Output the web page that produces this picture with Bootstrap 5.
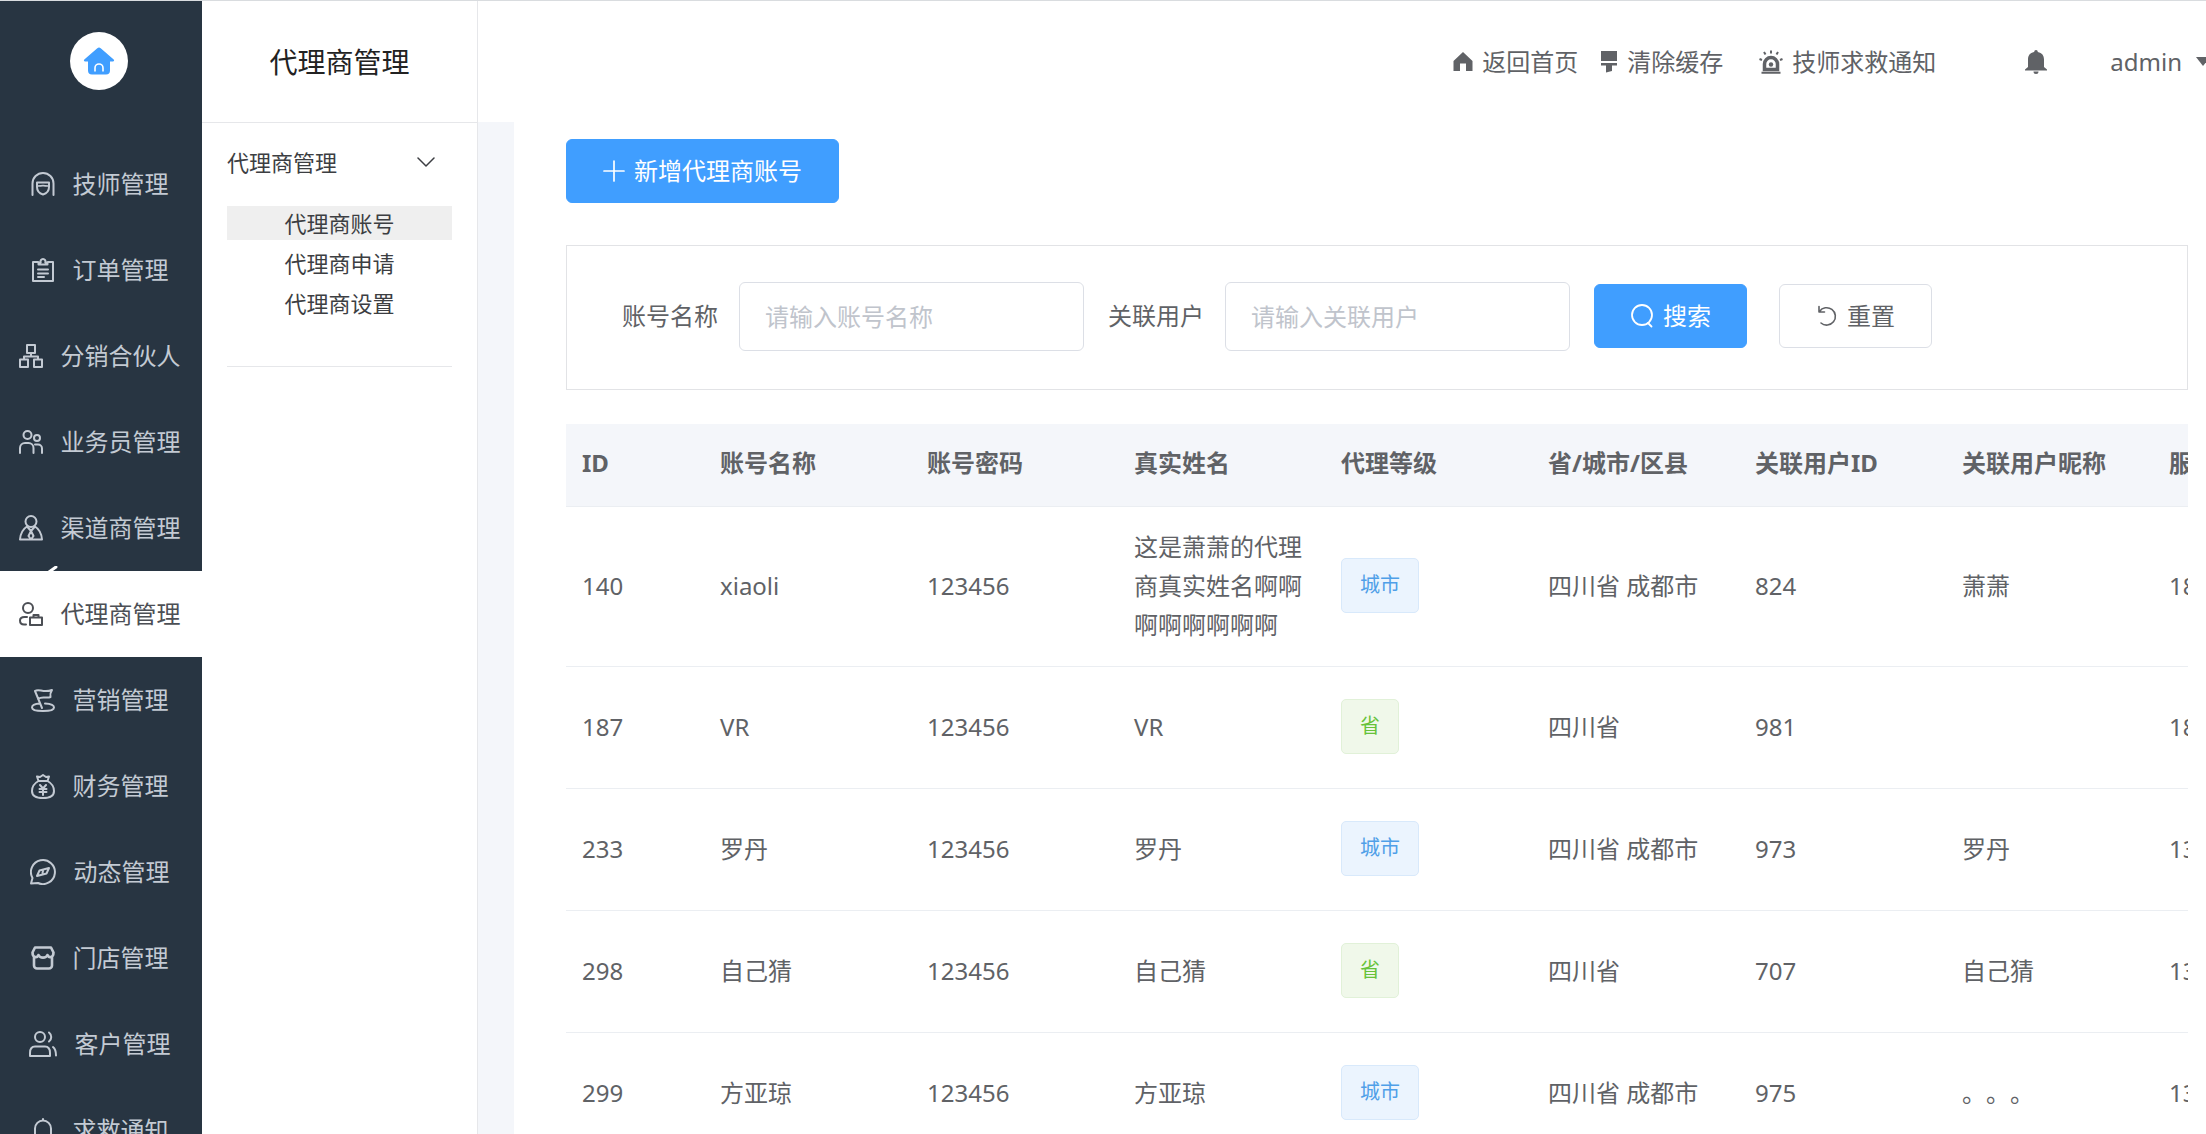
<!DOCTYPE html>
<html lang="zh-CN">
<head>
<meta charset="utf-8">
<meta name="viewport" content="width=device-width, initial-scale=1">
<title>代理商管理</title>
<link href="https://cdn.jsdelivr.net/npm/bootstrap@5.3.0/dist/css/bootstrap.min.css" rel="stylesheet">
<style>
  :root { --side: #283542; --line: #e6e7ea; --strip: #f4f6fa; --brand: #409eff; --ink: #606266; }
  body { font-family: "Noto Sans", "Noto Sans CJK SC", sans-serif; font-size: 24px; line-height: 40px; color: var(--ink); background: #fff; text-spacing-trim: space-all; }
  a { color: inherit; text-decoration: none; }
  svg { display: block; flex: none; }
  .line-icon { fill: none; stroke: currentColor; stroke-width: 2; stroke-linecap: round; stroke-linejoin: round; }
  .app-shell { border-top: 1px solid #d9dcdf; }
  .side-bar { width: 202px; background: var(--side); color: #c3cad3; }
  .logo-area { height: 140px; padding: 31px 4px 0 0; }
  .logo-disc { width: 58px; height: 58px; }
  .side-link { height: 86px; gap: 18px; padding-right: 3px; }
  .side-link.active { background: #fff; color: #4c4f55; }
  .active-mark { left: 48px; top: -5px; color: #fff; }
  .sub-bar { width: 276px; border-right: 1px solid var(--line); color: #3c3e42; }
  .sub-title { height: 122px; font-size: 28px; color: #222; border-bottom: 1px solid var(--line); padding-top: 1px; }
  .sub-group { margin: 0 25px; padding-bottom: 46px; border-bottom: 1px solid var(--line); font-size: 22px; }
  .group-head { height: 78px; padding-right: 17px; margin-bottom: 5px; }
  .sub-list { gap: 6px; }
  .sub-link { height: 34px; line-height: 34px; }
  .sub-link.active { background: #efefef; }
  .top-bar { height: 121px; padding-top: 1px; }
  .top-link { gap: 9px; }
  .home-link { margin-right: 22px; }
  .rescue-link { margin-left: 36px; }
  .bell-link { margin: 0 63px 0 89px; }
  .user-link { gap: 14px; }
  .page-body { border-left: 36px solid var(--strip); padding: 17px 18px 0 52px; }
  .btn { font-size: 24px; line-height: 40px; height: 64px; border-radius: 6px; gap: 9px; font-family: inherit; }
  .btn-brand { --bs-btn-color: #fff; --bs-btn-bg: var(--brand); --bs-btn-border-color: var(--brand); --bs-btn-hover-color: #fff; --bs-btn-hover-bg: #66b1ff; --bs-btn-hover-border-color: #66b1ff; }
  .btn-plain { --bs-btn-color: var(--ink); --bs-btn-bg: #fff; --bs-btn-border-color: #dcdfe6; --bs-btn-hover-color: var(--brand); --bs-btn-hover-border-color: var(--brand); }
  .add-btn { width: 273px; margin-bottom: 42px; }
  .form-btn { width: 153px; }
  .search-box { border: 1px solid #e2e3e6; height: 145px; padding: 0 0 3px 55px; margin-bottom: 34px; }
  .search-box .form-control { width: 345px; height: 69px; font-size: 24px; line-height: 40px; padding: 0 25px; border: 1px solid #dcdfe6; border-radius: 6px; color: var(--ink); }
  .search-box .form-control::placeholder { color: #c0c4cc; }
  .field-label { margin-right: 21px; }
  .agent-table { table-layout: fixed; width: 1794px; --bs-table-bg: transparent; --bs-table-color: var(--ink); color: var(--ink); }
  .agent-table > :not(caption) > * > * { padding: 20px 16px 22px; border-bottom: 1px solid #ebeef2; line-height: 39px; color: var(--ink); }
  .agent-table > thead > tr > th { background: var(--strip); font-weight: 700; white-space: nowrap; padding: 19px 16px 24px; }
  .agent-table > tbody > tr { height: 122px; }
  .id-col { width: 138px; }
  .data-col { width: 207px; }
  .level-tag { display: block; width: fit-content; height: 55px; line-height: 52px; padding: 0 18px; font-size: 20px; border: 1px solid; border-radius: 5px; }
  .tag-city { color: #4f9fe8; background: #ebf4fe; border-color: #d8e9fb; }
  .tag-prov { color: #67c23a; background: #f0f8ea; border-color: #e1f1d8; }
</style>
<script src="https://cdn.jsdelivr.net/npm/bootstrap@5.3.0/dist/js/bootstrap.bundle.min.js"></script>
</head>
<body>
<div class="app-shell d-flex vh-100 overflow-hidden">
  <nav class="side-bar flex-shrink-0" aria-label="主菜单">
    <div class="logo-area d-flex justify-content-center align-items-start">
      <a href="#" class="logo-disc bg-white rounded-circle d-flex align-items-center justify-content-center" aria-label="首页">
        <svg width="32" height="30" viewBox="0 0 32 30"><path d="M14.300 2.200a2.500 2.500 0 0 1 3.400 0l13 11.300c.8.800.4 2-.8 2H27v9a4 4 0 0 1-4 4H9a4 4 0 0 1-4-4v-9H2.100c-1.200 0-1.600-1.200-.8-2z" fill="#409eff"/><path d="M12 25.500V22a4 4 0 0 1 8 0v3.500" fill="none" stroke="#fff" stroke-width="1.600"/></svg>
      </a>
    </div>
    <a href="#" class="side-link d-flex align-items-center justify-content-center"><svg class="line-icon" width="24" height="24" viewBox="0 0 24 24"><path d="M1.500 23V11.500a10.500 10.500 0 0 1 21 0V23"/><path d="M6 10.500h12V15c0 4-2.500 6.500-6 7.500-3.500-1-6-3.500-6-7.500z"/><path d="M6.500 14c4 0 4 0 5.500-.5 1.500.5 1.500.5 5.500.5" stroke-width="1.500"/></svg><span>技师管理</span></a>
    <a href="#" class="side-link d-flex align-items-center justify-content-center"><svg class="line-icon" width="24" height="24" viewBox="0 0 24 24"><path d="M7 4H2v19h20V4h-5"/><path d="M7.500 6.500h9V4.500h-2.200a2.500 2.500 0 1 0-4.600 0H7.500zM7 11.500h10M7 15.500h10M7 19h6"/></svg><span>订单管理</span></a>
    <a href="#" class="side-link d-flex align-items-center justify-content-center"><svg class="line-icon" width="24" height="24" viewBox="0 0 24 24"><path d="M8 1h8v8H8zM1 15.500h8V23H1zM15 15.500h8V23h-8zM12 9v3.500M5 15.500v-3h14v3"/></svg><span>分销合伙人</span></a>
    <a href="#" class="side-link d-flex align-items-center justify-content-center"><svg class="line-icon" width="24" height="24" viewBox="0 0 24 24"><circle cx="8.500" cy="5" r="4"/><circle cx="18" cy="8" r="3"/><path d="M1 23v-5a5 5 0 0 1 5-5h3.500a5 5 0 0 1 5 5v5M16 14.500h3a4 4 0 0 1 4 4V23"/></svg><span>业务员管理</span></a>
    <a href="#" class="side-link d-flex align-items-center justify-content-center"><svg class="line-icon" width="24" height="26" viewBox="0 0 24 26"><circle cx="12" cy="6.500" r="5.500"/><path d="M8 11.500C4 14 1.500 18 1 24.500h22C22.500 18 20 14 16 11.500M8.500 12l3.500 4 3.500-4M12 16l-2.500 5 2.500 3.500 2.500-3.500z"/></svg><span>渠道商管理</span></a>
    <a href="#" class="side-link active position-relative d-flex align-items-center justify-content-center" aria-current="page"><svg class="active-mark position-absolute" width="10" height="6" viewBox="0 0 10 6"><path d="M1 6 8 1" stroke="currentColor" stroke-width="3" stroke-linecap="round"/></svg><svg class="line-icon" width="24" height="24" viewBox="0 0 24 24"><circle cx="9" cy="6" r="5"/><path d="M8 15H5.500c-3 0-4.500 1.500-4.500 3.500 0 2.500 1.500 4 4 4H7M11 15.500h12V23H11zM14.500 15.500V13h5v2.500"/></svg><span>代理商管理</span></a>
    <a href="#" class="side-link d-flex align-items-center justify-content-center"><svg class="line-icon" width="24" height="24" viewBox="0 0 24 24"><path d="M4 3c4-3 8 2.500 17-1-2 3-2 5-1.500 7-4 2-8-1.500-12.500 2M4 3l7 17M9 15.500c-5 .3-8 1.700-8 4 0 2.200 4 3.500 11 3.500s11-1.300 11-3.500c0-2.300-4-3.700-9-4"/></svg><span>营销管理</span></a>
    <a href="#" class="side-link d-flex align-items-center justify-content-center"><svg class="line-icon" width="24" height="25" viewBox="0 0 24 25"><path d="M7.500 7 6 2.500l3 .5 3-2 3 2 3-.5L16.500 7zM7.500 7C3 9.500 1 13 1 17c0 5 3.500 7 11 7s11-2 11-7c0-4-2-7.500-6.500-10M9 11l3 3.500 3-3.500M8.500 15h7M8.500 18h7M12 14.500V21"/></svg><span>财务管理</span></a>
    <a href="#" class="side-link d-flex align-items-center justify-content-center"><svg class="line-icon" width="26" height="26" viewBox="0 0 26 26"><path d="M1 24.500 2.500 19A12 12 0 1 1 8 24z"/><path d="m7 17 2.500-5.500L19 9l-2.500 5.500zM13 12l-.500 2"/></svg><span>动态管理</span></a>
    <a href="#" class="side-link d-flex align-items-center justify-content-center"><svg class="line-icon" width="24" height="24" viewBox="0 0 24 24"><path d="M4 1.500h16l2.500 5c0 5-4.500 6-6 2.500-1.500 3.500-7.500 3.500-9 0C6 12.500 1.500 11.500 1.500 6.500zM3 11v8.500a3 3 0 0 0 3 3h12a3 3 0 0 0 3-3V11" stroke-width="2.600"/></svg><span>门店管理</span></a>
    <a href="#" class="side-link d-flex align-items-center justify-content-center"><svg class="line-icon" width="28" height="26" viewBox="0 0 28 26"><circle cx="11" cy="6" r="5"/><path d="M1 25v-3c0-4 2-6.500 5-6.500h10c3 0 5 2.500 5 6.500v3zM20 1.500c3 2.500 3 6.500 0 9M24 16c2.500 2 3 5 3 8.500"/></svg><span>客户管理</span></a>
    <a href="#" class="side-link d-flex align-items-center justify-content-center"><svg class="line-icon" width="24" height="24" viewBox="0 0 24 24"><path d="M4 20v-9.500a8 8 0 0 1 16 0V20M1 20h22M12 2.500V1M10 23h4"/></svg><span>求救通知</span></a>
  </nav>

  <aside class="sub-bar flex-shrink-0">
    <div class="sub-title d-flex align-items-center justify-content-center">代理商管理</div>
    <div class="sub-group">
      <div class="group-head d-flex align-items-center justify-content-between"><span>代理商管理</span><svg class="line-icon" width="18" height="10" viewBox="0 0 18 10"><path d="m1 1 8 8 8-8" stroke-width="1.500"/></svg></div>
      <div class="sub-list d-flex flex-column text-center">
        <a href="#" class="sub-link active" aria-current="page">代理商账号</a>
        <a href="#" class="sub-link">代理商申请</a>
        <a href="#" class="sub-link">代理商设置</a>
      </div>
    </div>
  </aside>

  <div class="flex-grow-1 d-flex flex-column overflow-hidden">
    <header class="top-bar flex-shrink-0 d-flex align-items-center justify-content-end">
      <a href="#" class="top-link home-link d-flex align-items-center"><svg width="20" height="20" viewBox="0 0 20 20" fill="currentColor"><path d="M10 0 .500 9v10H7v-7.500h6V19h6.500V9z"/></svg>返回首页</a>
      <a href="#" class="top-link d-flex align-items-center"><svg width="18" height="22" viewBox="0 0 18 22" fill="currentColor"><path d="M1 0h16v10H1zM1 12h16v2.500h-5V20l-6 1.500v-7H1z"/></svg>清除缓存</a>
      <a href="#" class="top-link rescue-link d-flex align-items-center"><svg width="24" height="24" viewBox="0 0 24 24"><path d="M5.500 19.500V14a6.500 6.500 0 0 1 13 0v5.500z" fill="none" stroke="currentColor" stroke-width="3.500"/><circle cx="12" cy="14.500" r="2.200" fill="currentColor"/><path d="M2.500 22.800h19M12 .500v3M5 2l1.500 2.500M19 2l-1.500 2.500M.500 9l2.500 1M23.500 9 21 10" fill="none" stroke="currentColor" stroke-width="2"/></svg>技师求救通知</a>
      <a href="#" class="bell-link" aria-label="通知"><svg width="22" height="24" viewBox="0 0 22 24" fill="currentColor"><path d="M11 0c1.100 0 1.800.8 1.800 1.900C17 2.700 19 5.500 19 9.500V17l3 2.500v1H0v-1L3 17V9.500c0-4 2-6.800 6.200-7.600C9.200.8 9.900 0 11 0zM8.500 21.500h5a2.500 2.500 0 0 1-5 0z"/></svg></a>
      <a href="#" class="user-link d-flex align-items-center">admin<svg width="10" height="10" viewBox="0 0 10 10" fill="currentColor"><path d="M0 0h14L7 9z"/></svg></a>
    </header>

    <main class="page-body flex-grow-1 overflow-hidden">
      <button type="button" class="btn btn-brand add-btn d-flex align-items-center justify-content-center"><svg class="line-icon" width="22" height="22" viewBox="0 0 22 22"><path d="M11 1v20M1 11h20" stroke-width="1.700"/></svg>新增代理商账号</button>

      <form class="search-box d-flex align-items-center">
        <label class="field-label" for="accountName">账号名称</label>
        <input class="form-control me-4" id="accountName" type="text" placeholder="请输入账号名称">
        <label class="field-label" for="linkedUser">关联用户</label>
        <input class="form-control me-4" id="linkedUser" type="text" placeholder="请输入关联用户">
        <button type="button" class="btn btn-brand form-btn d-flex align-items-center justify-content-center me-2"><svg class="line-icon" width="24" height="24" viewBox="0 0 24 24"><circle cx="12" cy="11" r="10" stroke-width="1.800"/><path d="m18 19 3.500 3.500" stroke-width="1.800"/></svg>搜索</button>
        <button type="reset" class="btn btn-plain form-btn d-flex align-items-center justify-content-center ms-4"><svg class="line-icon" width="22" height="22" viewBox="0 0 22 22"><path d="M3 1.500V7h5.500M3.500 6.500A8.700 8.700 0 1 1 5 18" stroke-width="1.600"/></svg>重置</button>
      </form>

      <div class="overflow-hidden">
        <table class="table agent-table align-middle mb-0">
          <colgroup><col class="id-col"><col class="data-col"><col class="data-col"><col class="data-col"><col class="data-col"><col class="data-col"><col class="data-col"><col class="data-col"><col class="data-col"></colgroup>
          <thead>
            <tr><th>ID</th><th>账号名称</th><th>账号密码</th><th>真实姓名</th><th>代理等级</th><th>省/城市/区县</th><th>关联用户ID</th><th>关联用户昵称</th><th>服</th></tr>
          </thead>
          <tbody>
            <tr><td>140</td><td>xiaoli</td><td>123456</td><td>这是萧萧的代理商真实姓名啊啊啊啊啊啊啊啊</td><td><span class="level-tag tag-city">城市</span></td><td>四川省 成都市</td><td>824</td><td>萧萧</td><td>18</td></tr>
            <tr><td>187</td><td>VR</td><td>123456</td><td>VR</td><td><span class="level-tag tag-prov">省</span></td><td>四川省</td><td>981</td><td></td><td>18</td></tr>
            <tr><td>233</td><td>罗丹</td><td>123456</td><td>罗丹</td><td><span class="level-tag tag-city">城市</span></td><td>四川省 成都市</td><td>973</td><td>罗丹</td><td>13</td></tr>
            <tr><td>298</td><td>自己猜</td><td>123456</td><td>自己猜</td><td><span class="level-tag tag-prov">省</span></td><td>四川省</td><td>707</td><td>自己猜</td><td>13</td></tr>
            <tr><td>299</td><td>方亚琼</td><td>123456</td><td>方亚琼</td><td><span class="level-tag tag-city">城市</span></td><td>四川省 成都市</td><td>975</td><td>。。。</td><td>13</td></tr>
          </tbody>
        </table>
      </div>
    </main>
  </div>
</div>
</body>
</html>
